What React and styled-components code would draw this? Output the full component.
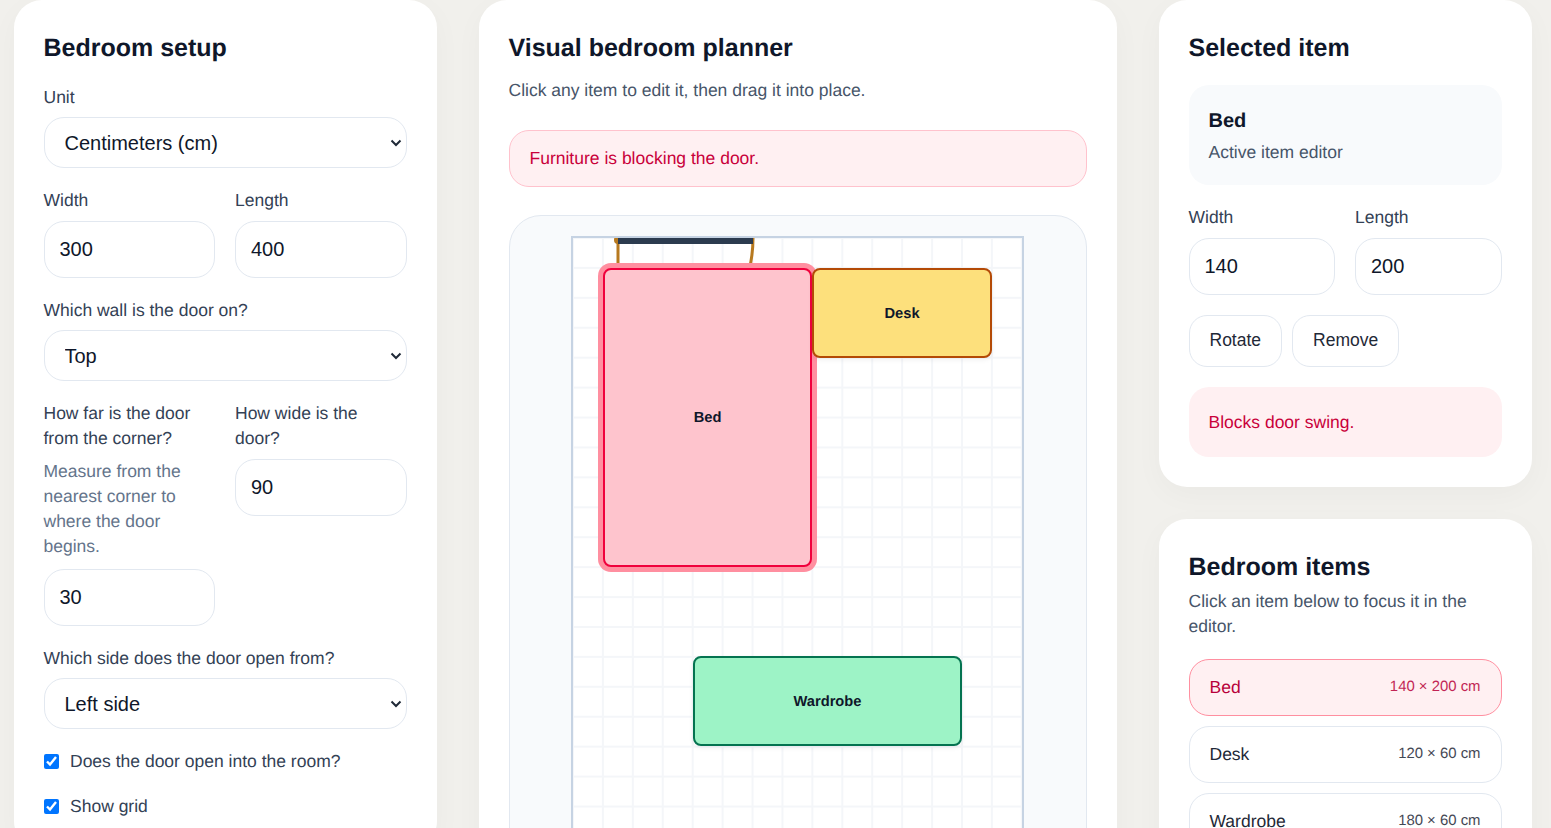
import React from 'react';
import styled, { createGlobalStyle } from 'styled-components';

const chevron = `url("data:image/svg+xml,%3Csvg xmlns='http://www.w3.org/2000/svg' width='12' height='8' viewBox='0 0 12 8'%3E%3Cpath d='M1.5 1.5 6 6l4.5-4.5' fill='none' stroke='%231f2937' stroke-width='2'/%3E%3C/svg%3E")`

const GlobalStyle = createGlobalStyle`
  * { box-sizing: border-box; }
  html, body { margin: 0; height: 100%; overflow: hidden; }
  body {
    background: #f1f0ec;
    color: #0f172a;
    font-family: "Liberation Sans", Arial, sans-serif;
    text-rendering: geometricPrecision;
  }`

const Page = styled.div`
  display: grid;
  grid-template-columns: 423px 638px 373px;
  column-gap: 42px;
  align-items: start;
  padding-left: 13.5px;`

const Column = styled.div`
  display: flex;
  flex-direction: column;
  gap: 32px;`

const Card = styled.section`
  background: #fff;
  border-radius: 28px;
  padding: 30px;
  box-shadow: 0 8px 30px rgba(15, 23, 42, 0.03);`

const Heading = styled.h2`
  margin: 0;
  font-size: 25px;
  line-height: 36px;
  font-weight: 700;
  color: #0f172a;`

const Stack = styled.div`
  display: flex;
  flex-direction: column;
  gap: 20px;
  margin-top: ${p => p.$top || 18.5}px;`

const Field = styled.label`
  display: flex;
  flex-direction: column;
  gap: 7.5px;
  min-width: 0;`

const LabelText = styled.span`
  font-size: 17.5px;
  line-height: 25px;
  color: #334155;`

const Help = styled.span`
  font-size: 17.5px;
  line-height: 25px;
  color: #64748b;
  margin-bottom: 2.9px;`

const Select = styled.select`
  appearance: none;
  width: 100%;
  height: 51px;
  padding: 0 20px;
  border: 1px solid #e2e8f0;
  border-radius: 20px;
  background: #fff ${chevron} no-repeat right 4px center;
  color: #0f172a;
  font: 20px "Liberation Sans", Arial, sans-serif;`

const NumberInput = styled.input`
  width: 100%;
  height: 57px;
  padding: 0 15px;
  border: 1px solid #e2e8f0;
  border-radius: 20px;
  background: #fff;
  color: #0f172a;
  font: 20px "Liberation Sans", Arial, sans-serif;`

const TwoCols = styled.div`
  display: grid;
  grid-template-columns: 1fr 1fr;
  column-gap: 20px;
  align-items: start;`

const CheckRow = styled.label`
  display: flex;
  align-items: center;
  gap: 11.5px;
  font-size: 17.5px;
  line-height: 25px;
  color: #334155;`

const Check = styled.input`
  width: 15px;
  height: 15px;
  margin: 0;`

const Subtitle = styled.p`
  margin: 11.5px 0 0;
  font-size: 17.5px;
  line-height: 25px;
  color: #475569;`

const Alert = styled.div`
  display: flex;
  align-items: center;
  height: 57px;
  margin-top: 27.5px;
  padding: 0 20px;
  border: 1px solid #ffc2cd;
  border-radius: 20px;
  background: #fff0f2;
  color: #c9003a;
  font-size: 17.5px;`

const Stage = styled.div`
  margin-top: 28px;
  padding: 20px 0;
  display: flex;
  justify-content: center;
  border: 1px solid #e2e8f0;
  border-radius: 32px;
  background: #f8fafc;`

const Room = styled.div`
  position: relative;
  flex: none;
  width: 453px;
  height: 604px;
  overflow: hidden;
  border: 2px solid #c6d3e3;
  background-color: #fff;
  background-image:
    linear-gradient(to right, #f4f6f9 2px, transparent 2px),
    linear-gradient(to bottom, #f4f6f9 2px, transparent 2px);
  background-size: 29.93px 29.93px;
  background-position: -1px -1px;`

const DoorSwing = styled.svg`
  position: absolute;
  left: 0;
  top: 0;`

const Item = styled.div`
  position: absolute;
  display: flex;
  align-items: center;
  justify-content: center;
  left: ${p => p.$x}px;
  top: ${p => p.$y}px;
  width: ${p => p.$w}px;
  height: ${p => p.$h}px;
  padding-top: 1px;
  background: ${p => p.$fill};
  border: 2px solid ${p => p.$line};
  border-radius: 8px;
  box-shadow: ${p => p.$active ? '0 0 0 5px #ff8fa0' : '0 2px 5px rgba(15, 23, 42, 0.06)'};
  z-index: ${p => p.$active ? 1 : 2};
  font-size: 14.7px;
  font-weight: 700;
  color: #0f172a;`

const EditorBox = styled.div`
  margin-top: 19px;
  height: 100px;
  padding: 24px 20px 0;
  border-radius: 20px;
  background: #f8fafc;`

const EditorName = styled.div`
  font-size: 20px;
  line-height: 25px;
  font-weight: 700;
  color: #0f172a;`

const EditorNote = styled.div`
  margin-top: 6px;
  font-size: 17.5px;
  line-height: 25px;
  color: #475569;`

const Buttons = styled.div`
  display: flex;
  gap: 10px;`

const Button = styled.button`
  height: 52px;
  padding: 0 20px;
  border: 1px solid #e2e8f0;
  border-radius: 18px;
  background: #fff;
  color: #1f2937;
  font: 17.5px "Liberation Sans", Arial, sans-serif;`

const Warning = styled.div`
  display: flex;
  align-items: center;
  height: 70px;
  padding: 1px 20px 0;
  border-radius: 20px;
  background: #fff0f2;
  color: #c9003a;
  font-size: 17.5px;`

const ItemsNote = styled.p`
  margin: 4px 0 0;
  font-size: 17.5px;
  line-height: 25px;
  color: #475569;`

const ItemList = styled.div`
  display: flex;
  flex-direction: column;
  gap: 10px;
  margin-top: 20px;`

const ItemRow = styled.div`
  display: flex;
  align-items: center;
  justify-content: space-between;
  height: 57px;
  padding: 0 20px;
  border: 1px solid ${p => p.$active ? '#ff8fa0' : '#e2e8f0'};
  border-radius: 20px;
  background: ${p => p.$active ? '#fff0f2' : '#fff'};
  color: ${p => p.$active ? '#b8003a' : '#1f2937'};
  font-size: 17.5px;`

const ItemSize = styled.span`
  font-size: 14.9px;
  opacity: 0.85;`

const items = [
  { name: 'Bed', size: '140 × 200 cm', x: 30, y: 30, w: 209, h: 299, fill: '#fec4cd', line: '#f0003c', active: true },
  { name: 'Desk', size: '120 × 60 cm', x: 239, y: 30, w: 180, h: 90, fill: '#fde07c', line: '#b44a06' },
  { name: 'Wardrobe', size: '180 × 60 cm', x: 120, y: 418, w: 269, h: 90, fill: '#9df3c6', line: '#047350' },
];

export default function App() {
  return (
    <Page>
      <GlobalStyle />
      <Card>
        <Heading>Bedroom setup</Heading>
        <Stack>
          <Field>
            <LabelText>Unit</LabelText>
            <Select defaultValue="cm">
              <option value="cm">Centimeters (cm)</option>
              <option value="in">Inches (in)</option>
            </Select>
          </Field>
          <TwoCols>
            <Field>
              <LabelText>Width</LabelText>
              <NumberInput type="number" defaultValue={300} />
            </Field>
            <Field>
              <LabelText>Length</LabelText>
              <NumberInput type="number" defaultValue={400} />
            </Field>
          </TwoCols>
          <Field>
            <LabelText>Which wall is the door on?</LabelText>
            <Select defaultValue="top">
              <option value="top">Top</option>
              <option value="bottom">Bottom</option>
            </Select>
          </Field>
          <TwoCols>
            <Field>
              <LabelText>How far is the door from the corner?</LabelText>
              <Help>Measure from the nearest corner to where the door begins.</Help>
              <NumberInput type="number" defaultValue={30} />
            </Field>
            <Field>
              <LabelText>How wide is the<br />door?</LabelText>
              <NumberInput type="number" defaultValue={90} />
            </Field>
          </TwoCols>
          <Field>
            <LabelText>Which side does the door open from?</LabelText>
            <Select defaultValue="left">
              <option value="left">Left side</option>
              <option value="right">Right side</option>
            </Select>
          </Field>
          <CheckRow>
            <Check type="checkbox" defaultChecked />
            Does the door open into the room?
          </CheckRow>
          <CheckRow>
            <Check type="checkbox" defaultChecked />
            Show grid
          </CheckRow>
        </Stack>
      </Card>

      <Card>
        <Heading>Visual bedroom planner</Heading>
        <Subtitle>Click any item to edit it, then drag it into place.</Subtitle>
        <Alert>Furniture is blocking the door.</Alert>
        <Stage>
          <Room>
            <DoorSwing width="449" height="600" viewBox="0 0 449 600">
              <circle cx="45" cy="2" r="4" fill="#b7791f" />
              <path d="M45 0 V135 A135 135 0 0 0 180 0" fill="none" stroke="#b7791f" strokeWidth="3" />
              <rect x="45" y="0" width="135" height="6" fill="#2c3b4f" />
            </DoorSwing>
            {items.map(item => (
              <Item key={item.name} $x={item.x} $y={item.y} $w={item.w} $h={item.h} $fill={item.fill} $line={item.line} $active={item.active}>
                {item.name}
              </Item>
            ))}
          </Room>
        </Stage>
      </Card>

      <Column>
        <Card>
          <Heading>Selected item</Heading>
          <EditorBox>
            <EditorName>Bed</EditorName>
            <EditorNote>Active item editor</EditorNote>
          </EditorBox>
          <Stack $top={20}>
            <TwoCols>
              <Field>
                <LabelText>Width</LabelText>
                <NumberInput type="number" defaultValue={140} />
              </Field>
              <Field>
                <LabelText>Length</LabelText>
                <NumberInput type="number" defaultValue={200} />
              </Field>
            </TwoCols>
            <Buttons>
              <Button>Rotate</Button>
              <Button>Remove</Button>
            </Buttons>
            <Warning>Blocks door swing.</Warning>
          </Stack>
        </Card>
        <Card>
          <Heading>Bedroom items</Heading>
          <ItemsNote>Click an item below to focus it in the editor.</ItemsNote>
          <ItemList>
            {items.map(item => (
              <ItemRow key={item.name} $active={item.active}>
                <span>{item.name}</span>
                <ItemSize>{item.size}</ItemSize>
              </ItemRow>
            ))}
          </ItemList>
        </Card>
      </Column>
    </Page>
  );
}
